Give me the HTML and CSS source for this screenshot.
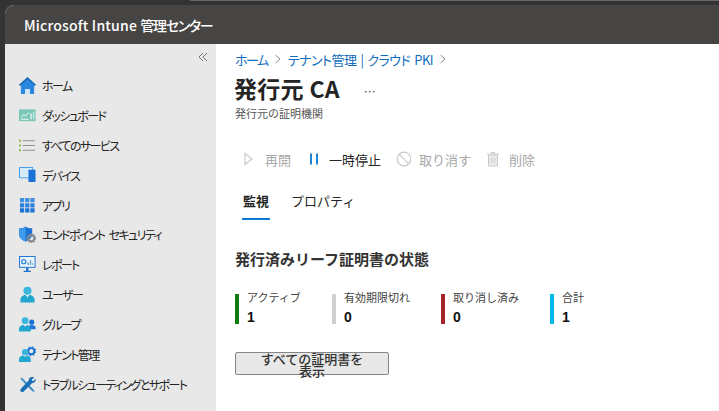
FILE: index.html
```html
<!DOCTYPE html>
<html lang="ja">
<head>
<meta charset="utf-8">
<title>発行元 CA</title>
<link rel="stylesheet" href="styles.css">
</head>
<body>
<div class="window">
  <header class="topbar"><span class="brand">Microsoft Intune <span class="brand-ja">管理センター</span></span></header>
  <div class="shell">
    <nav class="sidebar">
      <div class="collapse"><svg width="10" height="10" viewBox="0 0 10 10"><path d="M5 1 1 5l4 4M9 1 5 5l4 4" fill="none" stroke="#777" stroke-width="1"/></svg></div>
      <ul class="nav">
        <li class="nav-item"><svg class="ico" viewBox="0 0 18 18"><path d="M2 8.500 9 2.500l7 6V18h-4.500v-5h-5v5H2z" fill="#2b88e0"/><rect x="6.500" y="13" width="5" height="5" fill="#cfe6f8"/><path d="M9 0 0 8.300l1.200 1.300L9 2.600l7.800 7 1.200-1.300z" fill="#1468b8"/></svg><span>ホーム</span></li>
        <li class="nav-item"><svg class="ico" viewBox="0 0 18 18"><rect y="2.500" width="17.500" height="12.500" fill="#7cc8b8"/><path d="M2 11l3-3 2 1.500L10 6" fill="none" stroke="#fff" stroke-width="1"/><path d="M2 13h8" stroke="#fff"/><path d="M12 7h1.500v6H12zM15 5h1v8h-1z" fill="#e4f4f0"/></svg><span>ダッシュボード</span></li>
        <li class="nav-item"><svg class="ico" viewBox="0 0 18 18"><path d="M0 3h2v2H0zM0 8h2v2H0zM0 13h2v2H0z" fill="#84b840"/><path d="M4 4h13M4 9h13M4 14h13" stroke="#8f8f8f" stroke-width="1.200"/></svg><span>すべてのサービス</span></li>
        <li class="nav-item"><svg class="ico" viewBox="0 0 18 18"><rect width="15" height="12" y="0" rx=".8" fill="#3f9be8"/><rect x="1" y="1" width="13" height="10" fill="#d5ecfb"/><rect x="10" y="3" width="7.500" height="13" rx=".6" fill="#1a72d4"/></svg><span>デバイス</span></li>
        <li class="nav-item"><svg class="ico" viewBox="0 0 18 18"><path d="M1 1h4.500v4.500H1zM6.500 1H11v4.500H6.500zM12 1h4.500v4.500H12z" fill="#3f8fe0"/><path d="M1 6.500h4.500V11H1zM6.500 6.500H11V11H6.500zM12 6.500h4.500V11H12z" fill="#2b82dc"/><path d="M1 12h4.500v4.500H1zM6.500 12H11v4.500H6.500zM12 12h4.500v4.500H12z" fill="#1a72d4"/></svg><span>アプリ</span></li>
        <li class="nav-item"><svg class="ico" viewBox="0 0 18 18"><path d="M7 .5C5 2 3 2.500 0 2.500v6C0 12 3 15 7 16.500c4-1.500 7-4.500 7-8v-6C11 2.500 9 2 7 .5z" fill="#1a72d4"/><path d="M7 .5C5 2 3 2.500 0 2.500v6C0 12 3 15 7 16.500z" fill="#3f9be8"/><circle cx="13" cy="13" r="3.200" fill="none" stroke="#858a8e" stroke-width="2"/><circle cx="13" cy="13" r="4.600" fill="none" stroke="#858a8e" stroke-width="1.200" stroke-dasharray="1.500 1.400"/></svg><span class="spaced">エンドポイント セキュリティ</span></li>
        <li class="nav-item"><svg class="ico" viewBox="0 0 18 18"><rect y="0" width="17.500" height="12.500" fill="#1a72d4"/><rect x="1" y="1" width="15.500" height="10.500" fill="#e8f3fb"/><circle cx="5" cy="6" r="2.200" fill="none" stroke="#2b8ae0" stroke-width="1.300"/><path d="M9 9.500v-3h1.500v3zM11.500 9.500v-5H13v5zM14 9.500v-2h1v2z" fill="#6fa7c8"/><path d="M7.500 12.500h2.500v3H7.500zM5 15.500h7.500V17H5z" fill="#1a72d4"/></svg><span>レポート</span></li>
        <li class="nav-item"><svg class="ico" viewBox="0 0 18 18"><circle cx="9" cy="5" r="4.300" fill="#3bb6dc"/><path d="M1.500 17.500v-3c0-3 3-5 5.500-5l2 2 2-2c2.500 0 5.500 2 5.500 5v3z" fill="#22a8d0"/><path d="M8 9.800h2l-1 3z" fill="#e9f6fa"/></svg><span>ユーザー</span></li>
        <li class="nav-item"><svg class="ico" viewBox="0 0 18 18"><circle cx="13.500" cy="6.500" r="2.700" fill="#1a72d4"/><path d="M10 14v-2c0-1.500 1.500-2.500 3.500-2.500S17.500 10.500 17.500 12v2z" fill="#1a72d4"/><circle cx="6.500" cy="5" r="3.600" fill="#3bb6dc"/><path d="M0 16.500V14c0-2.500 2.500-4.500 4.500-4.500l2 1.500 2-1.500c2 0 4 2 4 4.500v2.500z" fill="#22a8d0"/></svg><span>グループ</span></li>
        <li class="nav-item"><svg class="ico" viewBox="0 0 18 18"><circle cx="13" cy="5.500" r="3.200" fill="none" stroke="#1a72d4" stroke-width="2"/><circle cx="13" cy="5.500" r="4.600" fill="none" stroke="#1a72d4" stroke-width="1.200" stroke-dasharray="1.800 1.800"/><circle cx="6.500" cy="6.500" r="3.400" fill="#3bb6dc"/><path d="M0 17v-3c0-2.500 2.500-4 4.500-4l2 1.500 2-1.500c2 0 4 1.500 4 4v3z" fill="#22a8d0"/></svg><span>テナント管理</span></li>
        <li class="nav-item"><svg class="ico" viewBox="0 0 18 18"><path d="M3 1.500 15 14l1.500 2.200-.8.8L13.500 15.500 1.500 3z" fill="#3f8fc4"/><path d="M16 1.500 13.500 4l.5 1 1 .5L17.500 3c.5 2-.5 4.500-3.500 4.500L5 16.500c-1 1-3 .5-3.500-.5S1.500 14 2.500 13L10.500 4.500C10 2 13 .5 16 1.500z" fill="#1a6fb5"/></svg><span>トラブルシューティングとサポート</span></li>
      </ul>
    </nav>
    <main class="content">
      <div class="crumbs"><a class="crumb-home">ホーム</a><svg class="chev" viewBox="0 0 8 10"><path d="M1.500 1 6 5 1.500 9" fill="none" stroke="#8a8a8a"/></svg><a>テナント管理 | クラウド PKI</a><svg class="chev" viewBox="0 0 8 10"><path d="M1.500 1 6 5 1.500 9" fill="none" stroke="#8a8a8a"/></svg></div>
      <div class="title-row"><h1>発行元 CA</h1><span class="more">…</span></div>
      <p class="subtitle">発行元の証明機関</p>
      <div class="toolbar">
        <span class="tool off"><svg class="tool-ico" viewBox="0 0 16 16"><path d="M4 2.500 11 8 4 13.500z" fill="none" stroke="#c8c8c8" stroke-width="1.100"/></svg>再開</span>
        <span class="tool pause"><svg class="tool-ico" viewBox="0 0 16 16"><path d="M5 2.500h2v11H5zM11 2.500h2v11h-2z" fill="#1a86d8"/></svg>一時停止</span>
        <span class="tool off"><svg class="tool-ico" viewBox="0 0 16 16"><circle cx="9" cy="8" r="6.800" fill="none" stroke="#c8c8c8" stroke-width="1.200"/><path d="M4.200 3.200l9.600 9.600" stroke="#c8c8c8" stroke-width="1.200"/></svg>取り消す</span>
        <span class="tool off"><svg class="tool-ico" viewBox="0 0 16 16"><path d="M3.500 4h9v11h-9z" fill="#eee" stroke="#c8c8c8"/><path d="M2 3h12M6 1.500h4" stroke="#c8c8c8" stroke-width="1.200"/><path d="M6 6.500v6M8 6.500v6M10 6.500v6" stroke="#d0d0d0"/></svg>削除</span>
      </div>
      <div class="tabs"><span class="tab active">監視</span><span class="tab">プロパティ</span></div>
      <h2>発行済みリーフ証明書の状態</h2>
      <div class="metrics">
        <div class="metric green"><span class="label">アクティブ</span><b>1</b></div>
        <div class="metric grey"><span class="label">有効期限切れ</span><b>0</b></div>
        <div class="metric red"><span class="label">取り消し済み</span><b>0</b></div>
        <div class="metric blue"><span class="label">合計</span><b>1</b></div>
      </div>
      <button class="cert-btn" type="button">すべての証明書を表示</button>
    </main>
  </div>
</div>
</body>
</html>
```
FILE: styles.css
```css
* { box-sizing: border-box; }
html, body { margin: 0; height: 100%; overflow: hidden; }
body {
  background: linear-gradient(#6a6a6a, #6a6a6a) right top / 529px 1px no-repeat, #333;
  padding: 5px 0 0 5px;
  font-family: "Noto Sans CJK JP", "Liberation Sans", sans-serif;
  color: #242424;
}
.window { height: 100%; display: flex; flex-direction: column; background: #fff; border-top-left-radius: 9px; overflow: hidden; }
.topbar { height: 39px; flex: none; background: #474544; display: flex; align-items: center; padding-left: 19px; }
.brand { color: #fff; font: 500 14px/1 "Noto Sans CJK JP", sans-serif; font-feature-settings: "palt"; letter-spacing: .2px; }
.brand-ja { letter-spacing: -1.3px; }
.shell { flex: 1; display: flex; min-height: 0; }
.sidebar { width: 211px; flex: none; background: #e8e8e8; }
.collapse { height: 26px; display: flex; justify-content: flex-end; align-items: center; padding: 0 8px 0 0; }
.nav { list-style: none; margin: 0; padding: 0; }
.nav-item { height: 29.9px; display: flex; align-items: center; gap: 6px; padding-left: 14px; font-size: 12px; font-feature-settings: "palt"; letter-spacing: -1.6px; color: #242424; position: relative; top: .5px; white-space: nowrap; }
.spaced { word-spacing: 3px; }
.ico { width: 17px; height: 17px; flex: none; }
.content { flex: 1; padding: 0 0 0 19px; min-width: 0; }
.crumbs { height: 24px; padding-top: 6px; display: flex; align-items: center; gap: 6px; font-size: 13px; font-feature-settings: "palt"; letter-spacing: -.5px; word-spacing: 1.500px; color: #0f6cbd; }
.crumb-home { letter-spacing: -1.5px; }
.chev { width: 8px; height: 10px; }
.title-row { height: 28px; margin-top: 6px; display: flex; align-items: center; gap: 24px; }
h1 { margin: 0 0 0 -1px; font-size: 23px; font-weight: 700; line-height: 28px; font-feature-settings: "palt"; letter-spacing: .3px; color: #242424; }
.more { font-size: 12px; color: #444; position: relative; top: 3px; }
.subtitle { margin: 4px 0 0; font-size: 11px; line-height: 14px; color: #555; }
.toolbar { margin-top: 26px; height: 26px; display: flex; align-items: center; gap: 14px; font-size: 13px; padding-left: 6px; }
.tool { display: flex; align-items: center; gap: 8px; }
.tool.off { color: #a8a8a8; }
.tool.pause { color: #242424; }
.tool-ico { width: 16px; height: 16px; }
.tabs { margin-top: 16px; height: 32px; display: flex; gap: 21px; padding-left: 8px; font-size: 13px; }
.tab { height: 32px; line-height: 26px; }
.tab.active { font-weight: 700; border-bottom: 2px solid #0f78d4; margin-left: -1px; padding-left: 1px; width: 28px; white-space: nowrap; }
h2 { margin: 28px 0 0; font-size: 15px; line-height: 22px; font-weight: 700; color: #333; }
.metrics { margin-top: 24px; display: grid; grid-template-columns: 97px 109px 109px auto; }
.metric { height: 30px; border-left: 4px solid #000; padding-left: 8px; display: flex; flex-direction: column; }
.metric .label { font-size: 11px; line-height: 6px; color: #444; white-space: nowrap; }
.metric b { font-size: 14px; line-height: 18px; color: #111; font-family: "Liberation Sans", sans-serif; margin-top: 8px; }
.green { border-color: #107c10; }
.grey { border-color: #d0d0d0; }
.red { border-color: #a4262c; }
.blue { border-color: #00b7f0; }
.cert-btn { display: block; margin-top: 28px; width: 154px; height: 23px; padding: 0 24px; background: #e8e8e8; border: 1px solid #858585; border-radius: 2px; font: 500 13px/12px "Noto Sans CJK JP", sans-serif; color: #333; }
```
